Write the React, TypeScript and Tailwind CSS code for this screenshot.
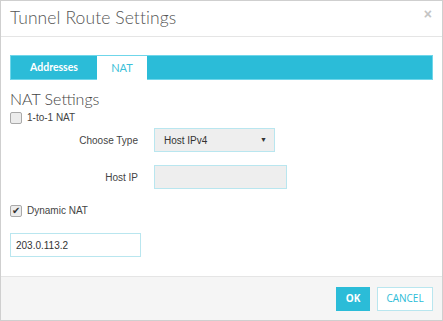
function Check({ checked }: { checked?: boolean }) {
  return (
    <span className="w-[12px] h-[12px] shrink-0 rounded-[2px] border border-[#a9a9a9] bg-[#ececec] flex items-center justify-center text-[10px] leading-none text-[#333]">
      {checked ? "✔" : null}
    </span>
  );
}

export default function App() {
  return (
    <div className="w-[443px] h-[321px] bg-white border border-[#cfcfcf] flex flex-col font-['Liberation_Sans',Arial,sans-serif] text-[#333]">
      {/* header */}
      <div className="h-[36px] shrink-0 border-b border-[#e5e5e5] flex items-start justify-between pl-[9px] pr-[10px]">
        <h1 className="mt-[6px] text-[17.5px] leading-[22px] font-light text-[#555] font-['Lato',sans-serif] tracking-[0.1px]">
          Tunnel Route Settings
        </h1>
        <span className="mt-[6px] text-[14px] leading-[14px] font-bold text-[#c4c4c4]">×</span>
      </div>

      {/* body */}
      <div className="flex-1 px-[9px] pt-[18px]">
        <div className="h-[25px] bg-[#2bbcd8] border border-[#6fd6ea] flex text-[11px] font-['Lato',sans-serif]">
          <div className="w-[86px] flex items-center justify-center text-white font-bold text-[10.5px]">Addresses</div>
          <div className="w-[50px] -mt-px h-[25px] bg-white border-t border-[#6fd6ea] flex items-center justify-center text-[#3cbfd8]">
            NAT
          </div>
        </div>

        <h2 className="mt-[10px] text-[16px] leading-[18px] font-light text-[#444] font-['Lato',sans-serif]">NAT Settings</h2>

        <div className="mt-[2px] flex items-center gap-[5px] text-[10px] text-[#444]">
          <Check />
          1-to-1 NAT
        </div>

        <div className="mt-[3px] flex items-center">
          <span className="w-[128px] text-right text-[10px] text-[#444]">Choose Type</span>
          <div className="ml-[16px] w-[121px] h-[24px] bg-[#eeeeee] border border-[#b9e6ef] flex items-center justify-between pl-[9px] pr-[7px] text-[10px] text-[#333]">
            <span>Host IPv4</span>
            <span className="text-[7px]">▼</span>
          </div>
        </div>

        <div className="mt-[13px] flex items-center">
          <span className="w-[128px] text-right text-[10px] text-[#444]">Host IP</span>
          <div className="ml-[16px] w-[133px] h-[24px] bg-[#eeeeee] border border-[#b9e6ef]" />
        </div>

        <div className="mt-[14px] flex items-center gap-[5px] text-[10px] text-[#444]">
          <Check checked />
          Dynamic NAT
        </div>

        <div className="mt-[15px] w-[131px] h-[24px] border border-[#b9e6ef] flex items-center px-[5px] text-[10px] text-[#333]">
          203.0.113.2
        </div>
      </div>

      {/* footer */}
      <div className="h-[44px] shrink-0 bg-[#f5f5f5] border-t border-[#e5e5e5] flex items-center justify-end gap-[7px] pr-[9px]">
        <button className="w-[34px] h-[24px] bg-[#2bbcd8] text-white text-[10px] font-bold font-['Open_Sans',sans-serif]">
          OK
        </button>
        <button className="w-[56px] h-[24px] bg-white border border-[#b9e6ef] text-[#2bbcd8] text-[10px] font-['Open_Sans',sans-serif]">
          CANCEL
        </button>
      </div>
    </div>
  );
}
